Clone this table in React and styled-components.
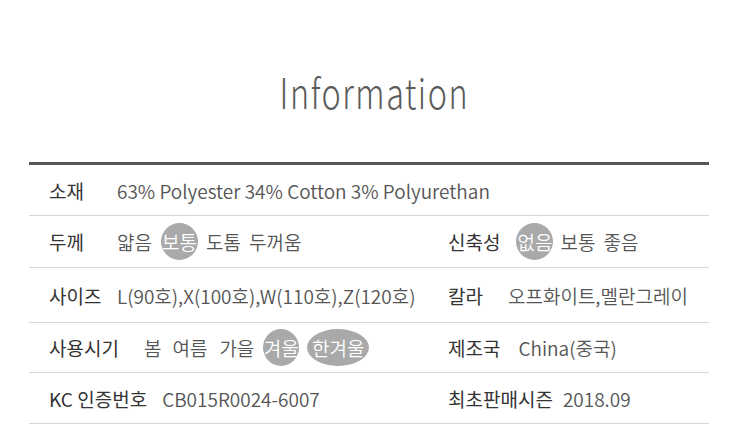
import React from "react";
import styled, { createGlobalStyle } from "styled-components";

const Global = createGlobalStyle`
  html, body { margin: 0; padding: 0; background: #fff; }
  body { font-family: "Noto Sans CJK KR", "Noto Sans", sans-serif; }
`;

const Page = styled.div`
  width: 740px;
  height: 440px;
  padding: 0 31px 0 29px;
  box-sizing: border-box;
  overflow: hidden;
`;

const Title = styled.h1`
  margin: 0;
  padding: 64px 0 0 14px;
  height: 162px;
  box-sizing: border-box;
  text-align: center;
  font-family: "Noto Sans CJK KR", sans-serif;
  font-weight: 300;
  font-size: 42px;
  line-height: 54px;
  letter-spacing: 2px;
  color: #5a5a5a;
  transform: scaleX(0.77);
`;

const Table = styled.div`
  border-top: 3px solid #555;
  display: grid;
  grid-template-columns: 399px 1fr;
`;

const Row = styled.div`
  grid-column: ${(p) => (p.$full ? "1 / span 2" : "auto")};
  display: flex;
  align-items: center;
  height: ${(p) => p.$h}px;
  box-sizing: border-box;
  border-bottom: 1px solid #d6d6d6;
  padding-left: 20px;
  font-size: 19px;
  white-space: nowrap;
`;

const Label = styled.span`
  display: inline-block;
  min-width: ${(p) => p.$w || 0}px;
  margin-right: ${(p) => p.$gap || 0}px;
  color: #333;
  font-weight: 400;
`;

const Value = styled.span`
  color: #555;
  font-weight: 350;
`;

const Options = styled.div`
  display: flex;
  align-items: center;
`;

const Option = styled.span`
  display: inline-flex;
  align-items: center;
  justify-content: center;
  margin-left: ${(p) => p.$ml || 0}px;
  height: ${(p) => (p.$on ? "37px" : "auto")};
  width: ${(p) => (p.$on ? `${p.$w || 37}px` : "auto")};
  border-radius: 50%;
  background: ${(p) => (p.$on ? "#a9a9a9" : "transparent")};
  color: ${(p) => (p.$on ? "#fff" : "#555")};
  font-weight: 350;
  white-space: nowrap;
`;

export default function App() {
  return (
    <Page>
      <Global />
      <Title>Information</Title>
      <Table>
        <Row $full $h={51}>
          <Label $w={68}>소재</Label>
          <Value>63% Polyester 34% Cotton 3% Polyurethan</Value>
        </Row>
        <Row $h={52}>
          <Label $w={68}>두께</Label>
          <Options>
            <Option>얇음</Option>
            <Option $on $ml={9}>보통</Option>
            <Option $ml={8}>도톰</Option>
            <Option $ml={8}>두꺼움</Option>
          </Options>
        </Row>
        <Row $h={52}>
          <Label $gap={16}>신축성</Label>
          <Options>
            <Option $on>없음</Option>
            <Option $ml={7}>보통</Option>
            <Option $ml={8}>좋음</Option>
          </Options>
        </Row>
        <Row $h={55}>
          <Label $w={68}>사이즈</Label>
          <Value>L(90호),X(100호),W(110호),Z(120호)</Value>
        </Row>
        <Row $h={55}>
          <Label $gap={25}>칼라</Label>
          <Value>오프화이트,멜란그레이</Value>
        </Row>
        <Row $h={50}>
          <Label $gap={25}>사용시기</Label>
          <Options>
            <Option>봄</Option>
            <Option $ml={11}>여름</Option>
            <Option $ml={12}>가을</Option>
            <Option $on $w={36} $ml={9}>겨울</Option>
            <Option $on $w={62} $ml={8}>한겨울</Option>
          </Options>
        </Row>
        <Row $h={50}>
          <Label $gap={18}>제조국</Label>
          <Value>China(중국)</Value>
        </Row>
        <Row $h={51}>
          <Label $gap={15}>KC 인증번호</Label>
          <Value>CB015R0024-6007</Value>
        </Row>
        <Row $h={51}>
          <Label $gap={10}>최초판매시즌</Label>
          <Value>2018.09</Value>
        </Row>
      </Table>
    </Page>
  );
}
